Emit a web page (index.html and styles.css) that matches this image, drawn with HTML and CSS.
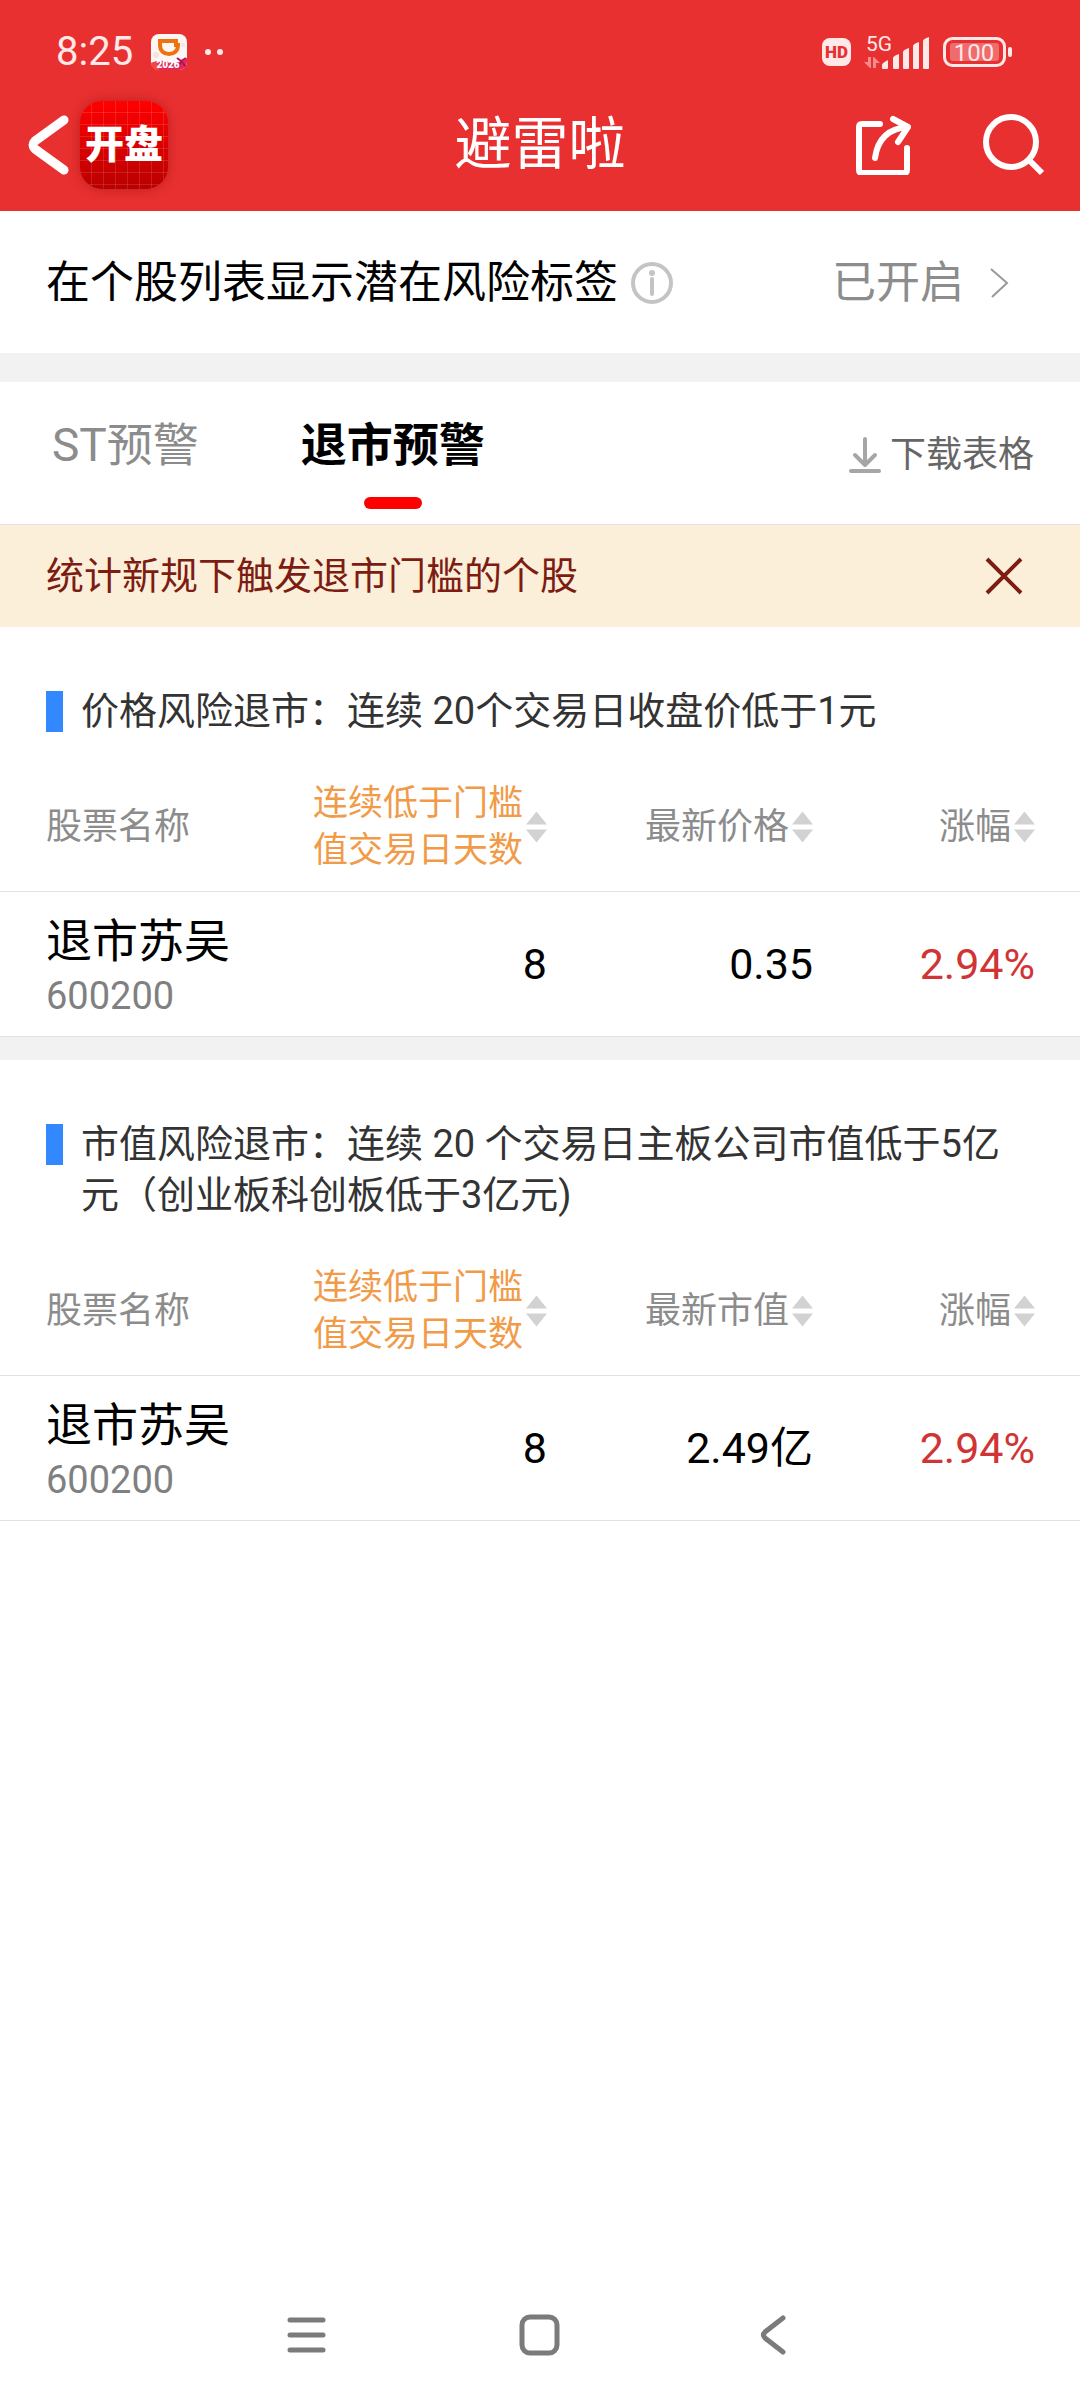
FILE: index.html
```html
<!DOCTYPE html>
<html lang="zh-CN">
  <head>
    <meta charset="utf-8" />
    <title>避雷啦</title>
    <meta name="viewport" content="width=device-width, initial-scale=1" />
    <link rel="stylesheet" href="styles.css" />
  </head>
  <body>
    <header class="header">
      <div class="status">
        <span class="time">8:25</span>
        <svg class="notice" width="36" height="36" viewBox="0 0 36 36">
          <defs>
            <clipPath id="notice-clip"><rect width="36" height="36" rx="8" /></clipPath>
          </defs>
          <g clip-path="url(#notice-clip)">
            <rect width="36" height="36" fill="#fcf6f4" />
            <circle cx="5" cy="21" r="3" fill="#f6e2de" />
            <circle cx="32" cy="11" r="2" fill="#f6e2de" />
            <path d="M9 7h16v4h2c0 6-4 9-9 9s-9-3-9-9z" fill="none" stroke="#f0720f" stroke-width="4" />
            <path d="M0 29q9-4 18-1t18-4v12H0z" fill="#e02a5c" />
            <path d="M0 29l6-1 2 8H0z" fill="#f0483c" />
            <path d="M26 24l4 3 5-3M30 27l-2 6M30 27l5 6" stroke="#b3135c" stroke-width="2" fill="none" />
            <text x="17" y="34" text-anchor="middle" class="notice-year">2026</text>
          </g>
        </svg>
        <svg width="20" height="8" viewBox="0 0 20 8" fill="#ffe8e8">
          <circle cx="4" cy="4" r="3" />
          <circle cx="16" cy="4" r="3" />
        </svg>
        <span class="hd">HD</span>
        <svg class="signal" width="68" height="44" viewBox="0 -4 68 44" fill="#ffe8e8">
          <text x="3" y="17" class="network">5G</text>
          <g fill="#f58a8a">
            <path d="M5 23h3v11h-1l-6-6h4z" />
            <path d="M10 34V23h1l6 6h-4v5z" />
          </g>
          <path d="M19 34v-3q0-2 6-5v8q0 1-1 1h-4q-1 0-1-1z" />
          <path d="M30 34V24q0-2 6-4v14q0 1-1 1h-4q-1 0-1-1z" />
          <path d="M40 34V18q0-2 6-4v20q0 1-1 1h-4q-1 0-1-1z" />
          <path d="M50 34V12q0-2 6-4v26q0 1-1 1h-4q-1 0-1-1z" />
          <path d="M60 34V7q0-2 6-4v31q0 1-1 1h-4q-1 0-1-1z" />
        </svg>
        <svg class="battery" width="70" height="30" viewBox="0 0 70 30">
          <rect x="1.5" y="1.5" width="60" height="27" rx="8" fill="none" stroke="#ffe8e8" stroke-width="3" />
          <rect x="7" y="6" width="49" height="18" rx="3" fill="#f06b6b" />
          <rect x="65" y="10" width="4" height="10" rx="2" fill="#ffe8e8" />
          <text x="31" y="24" text-anchor="middle" class="percent">100</text>
        </svg>
      </div>
      <div class="bar">
        <div class="bar-left">
          <button class="icon-btn" aria-label="返回">
            <svg width="41" height="60" viewBox="0 0 41 60">
              <path d="M36 5L7 26q-4 4 0 8L36 55" fill="none" stroke="#fff" stroke-width="9" stroke-linecap="round" stroke-linejoin="round" />
            </svg>
          </button>
          <a class="logo" href="#">开盘</a>
        </div>
        <h1>避雷啦</h1>
        <div class="bar-right">
          <button class="icon-btn" aria-label="分享">
            <svg width="56" height="60" viewBox="0 0 56 60" fill="none" stroke="#fff" stroke-width="6" stroke-linecap="round" stroke-linejoin="round">
              <path d="M25 9H7q-3 0-3 3v43q0 3 3 3h42q3 0 3-3V33" />
              <path d="M20 43Q24 14 53 12M38 4l15 8-10 15" />
            </svg>
          </button>
          <button class="icon-btn" aria-label="搜索">
            <svg width="72" height="62" viewBox="0 0 72 62" fill="none" stroke="#fff" stroke-width="6">
              <circle cx="31" cy="28" r="25" />
              <path d="M48 45l14 14" />
            </svg>
          </button>
        </div>
      </div>
    </header>

    <main>
      <div class="setting">
        <span>在个股列表显示潜在风险标签</span>
        <button class="icon-btn info" aria-label="说明">
          <svg width="44" height="44" viewBox="0 0 44 44" fill="none" stroke="#c4c4c4" stroke-width="4">
            <circle cx="22" cy="22" r="19" />
            <path d="M22 18v15" stroke-linecap="round" />
            <circle cx="22" cy="12" r="3" fill="#c4c4c4" stroke="none" />
          </svg>
        </button>
        <a class="state" href="#">
          已开启
          <svg width="20" height="32" viewBox="0 0 20 32">
            <path d="M1 2l16 14L2 30" fill="none" stroke="#999" stroke-width="2" />
          </svg>
        </a>
      </div>

      <div class="tabs">
        <button class="tab">ST预警</button>
        <button class="tab active">退市预警</button>
        <a class="download" href="#">
          <svg width="34" height="38" viewBox="0 0 34 38" fill="none" stroke="#a6a6a6" stroke-width="4" stroke-linecap="round" stroke-linejoin="round">
            <path d="M17 3v26M7 19l10 10 10-10M3 35h28" />
          </svg>
          下载表格
        </a>
      </div>

      <div class="tip">
        <span>统计新规下触发退市门槛的个股</span>
        <button class="icon-btn" aria-label="关闭">
          <svg width="38" height="38" viewBox="0 0 38 38">
            <path d="M2 2l34 34M36 2L2 36" stroke="#7d1c12" stroke-width="4" />
          </svg>
        </button>
      </div>

      <section class="block">
        <h2>价格风险退市：连续 20个交易日收盘价低于1元</h2>
        <table>
          <thead>
            <tr>
              <th class="name">股票名称</th>
              <th class="days"><button class="sort on">连续低于门槛<br />值交易日天数</button></th>
              <th class="value"><button class="sort">最新价格</button></th>
              <th class="rate"><button class="sort">涨幅</button></th>
            </tr>
          </thead>
          <tbody>
            <tr>
              <td class="name">退市苏吴<small>600200</small></td>
              <td>8</td>
              <td>0.35</td>
              <td class="rate up">2.94%</td>
            </tr>
          </tbody>
        </table>
      </section>

      <section class="block">
        <h2>市值风险退市：连续 20 个交易日主板公司市值低于5亿元（创业板科创板低于3亿元)</h2>
        <table>
          <thead>
            <tr>
              <th class="name">股票名称</th>
              <th class="days"><button class="sort on">连续低于门槛<br />值交易日天数</button></th>
              <th class="value"><button class="sort">最新市值</button></th>
              <th class="rate"><button class="sort">涨幅</button></th>
            </tr>
          </thead>
          <tbody>
            <tr>
              <td class="name">退市苏吴<small>600200</small></td>
              <td>8</td>
              <td>2.49亿</td>
              <td class="rate up">2.94%</td>
            </tr>
          </tbody>
        </table>
      </section>
    </main>

    <nav class="nav">
      <button class="icon-btn" aria-label="最近任务">
        <svg width="40" height="46" viewBox="0 0 40 46" stroke="#7b7b7b" stroke-width="5" stroke-linecap="round">
          <path d="M4 8h33M4 23h33M4 38h33" />
        </svg>
      </button>
      <button class="icon-btn" aria-label="主页">
        <svg width="42" height="46" viewBox="0 0 42 46" fill="none" stroke="#7b7b7b" stroke-width="5">
          <rect x="3" y="5" width="35" height="36" rx="8" />
        </svg>
      </button>
      <button class="icon-btn" aria-label="返回上一页">
        <svg width="28" height="46" viewBox="0 0 28 46" fill="none" stroke="#7b7b7b" stroke-width="5" stroke-linecap="round">
          <path d="M23 6L5 20q-3 3 0 6L23 40" />
        </svg>
      </button>
    </nav>
  </body>
</html>
```

FILE: styles.css
```css
* {
  box-sizing: border-box;
}
body {
  display: flex;
  flex-direction: column;
  min-height: 100vh;
  margin: 0;
  background: #fff;
  color: #000;
  font-family: Roboto, 'Noto Sans CJK SC', sans-serif;
  font-size: 44px;
  line-height: 56px;
}
button {
  padding: 0;
  border: 0;
  background: none;
  color: inherit;
  font: inherit;
  cursor: pointer;
}
a {
  color: inherit;
  text-decoration: none;
}
svg {
  display: block;
  flex-shrink: 0;
}

/* header */
.header {
  background: #e83030;
  color: #fff;
}
.status {
  display: flex;
  align-items: center;
  padding: 24px 67px 0 56px;
  color: #ffe8e8;
  font-size: 40px;
}
.notice {
  margin: 0 17px 0 18px;
}
.notice-year {
  fill: #fff;
  font-size: 10px;
  font-weight: 900;
}
.hd {
  margin-left: auto;
  padding: 0 3px;
  border-radius: 8px;
  background: #ffe8e8;
  color: #e83030;
  font-size: 17px;
  font-weight: 900;
  line-height: 28px;
}
.signal {
  margin: 0 12px;
}
.network {
  font-size: 21px;
}
.percent {
  fill: #ffe8e8;
  font-size: 24px;
}
.bar {
  display: grid;
  grid-template-columns: 1fr auto 1fr;
  align-items: center;
  padding: 21px 28px 22px;
}
.bar-left,
.bar-right {
  display: flex;
  align-items: center;
  gap: 11px;
}
.bar-right {
  justify-content: flex-end;
  gap: 69px;
}
.logo {
  width: 88px;
  border-radius: 22px;
  background:
    repeating-linear-gradient(90deg, transparent 0 11px, rgba(255, 255, 255, 0.12) 11px 12px),
    repeating-linear-gradient(transparent 0 11px, rgba(255, 255, 255, 0.12) 11px 12px),
    linear-gradient(#ff0000, #b80000);
  box-shadow: 0 0 12px rgba(130, 0, 0, 0.4);
  font-size: 39px;
  font-weight: 900;
  line-height: 88px;
  text-align: center;
}
h1 {
  margin: 0;
  font-size: 57px;
  font-weight: 400;
}

/* switch row */
.setting {
  display: flex;
  align-items: center;
  padding: 44px 70px 42px 46px;
  border-bottom: 29px solid #f2f2f2;
}
.info {
  margin-left: 12px;
}
.state {
  display: flex;
  align-items: center;
  gap: 26px;
  margin-left: auto;
  color: #8c8c8c;
}

/* tabs */
.tabs {
  display: flex;
  align-items: center;
  gap: 102px;
  padding: 35px 46px 15px 52px;
  border-bottom: 1px solid #e2e2e2;
}
.tab {
  color: #8c8c8c;
  font-size: 46px;
}
.tab::after {
  content: '';
  display: block;
  width: 58px;
  height: 12px;
  margin: 24px auto 0;
  border-radius: 6px;
}
.tab.active {
  color: #000;
  font-weight: 700;
}
.tab.active::after {
  background: #ff0000;
}
.download {
  display: flex;
  align-items: center;
  gap: 8px;
  margin: 0 0 16px auto;
  color: #666;
  font-size: 36px;
}

/* tip */
.tip {
  display: flex;
  align-items: center;
  justify-content: space-between;
  padding: 23px 57px 23px 46px;
  background: #fcefd9;
  color: #7d1c12;
  font-size: 38px;
}

/* stock lists */
.block {
  padding-top: 59px;
}
.block + .block {
  border-top: 23px solid #f2f2f2;
}
h2 {
  display: flex;
  gap: 18px;
  margin: 0;
  padding: 0 46px;
  color: #333;
  font-size: 38px;
  font-weight: 400;
  line-height: 51px;
}
h2::before {
  content: '';
  flex: none;
  width: 17px;
  height: 41px;
  margin-top: 5px;
  background: #3388ff;
}
table {
  width: 100%;
  border-collapse: collapse;
  table-layout: fixed;
}
tr {
  border-bottom: 1px solid #e2e2e2;
}
th,
td {
  padding: 0;
  font-size: 43px;
  text-align: right;
}
th {
  padding: 43px 0 17px;
  color: #8c8c8c;
  font-size: 36px;
  font-weight: 400;
  line-height: 47px;
}
.name {
  padding-left: 46px;
  text-align: left;
}
.days {
  width: 260px;
}
.value {
  width: 266px;
}
.rate {
  width: 267px;
  padding-right: 45px;
}
.sort {
  display: inline-flex;
  align-items: center;
  gap: 3px;
  vertical-align: top;
}
.sort::after {
  content: '';
  width: 21px;
  height: 31px;
  background: #d2d2d2;
  clip-path: polygon(50% 0, 100% 13px, 0 13px, 0 18px, 100% 18px, 50% 100%, 0 18px, 0 13px);
}
.sort.on {
  color: #f19a48;
  font-size: 35px;
}
td.name {
  padding-top: 21px;
  padding-bottom: 13px;
  font-size: 46px;
}
small {
  display: block;
  color: #808080;
  font-size: 38px;
  line-height: 54px;
}
.up {
  color: #d03434;
}

/* bottom nav */
.nav {
  display: grid;
  grid-template-columns: repeat(3, 1fr);
  align-items: center;
  justify-items: center;
  width: 65%;
  margin: auto auto 0;
  padding: 42px 0;
}
```
